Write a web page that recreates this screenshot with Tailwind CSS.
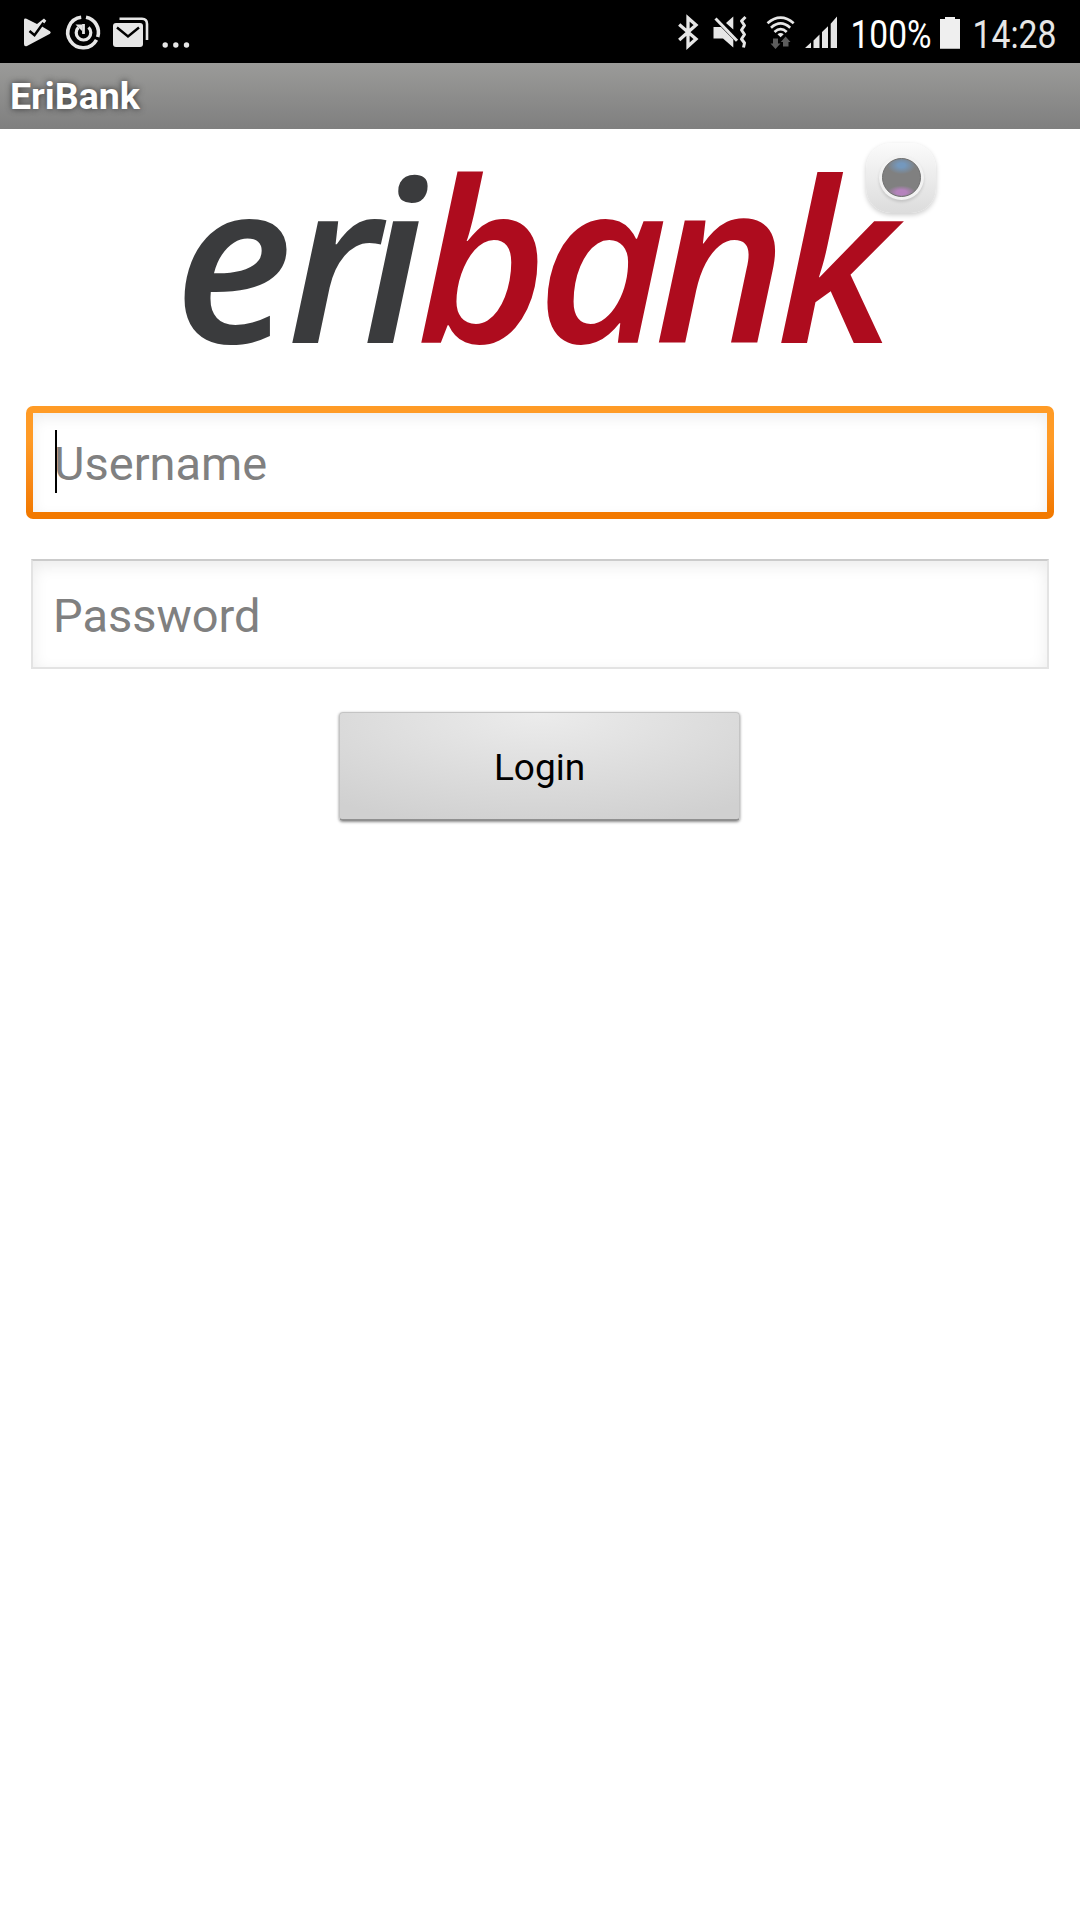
<!DOCTYPE html>
<html lang="en">
<head>
<meta charset="utf-8">
<meta name="viewport" content="width=device-width">
<title>EriBank</title>
<script src="https://cdn.jsdelivr.net/npm/@tailwindcss/browser@4"></script>
</head>
<body class="bg-white font-['Roboto',sans-serif]">
<div class="flex h-[1920px] w-[1080px] flex-col overflow-hidden bg-white">
  <header class="flex h-[63px] shrink-0 bg-black">
    <svg class="h-[63px] w-[1080px]" viewBox="0 0 1080 63" fill="#e6e6e6">
      <!-- store -->
      <path d="M24 20Q24 18 26.500 18.700L37 24L44 18.500L46.300 20.800L42 26.400L50 31.300Q51.500 32.500 50 33.700L27 46Q24 47 24 44Z"/>
      <path d="M29.500 31L34.500 35.200L43.500 22.700" fill="none" stroke="#000" stroke-width="2.500"/>
      <!-- power ring -->
      <g fill="none" stroke="#e6e6e6" stroke-width="3.600">
        <path d="M81.200 17.300A15.300 15.300 0 1 0 96.500 39.800M86 17.300A15.300 15.300 0 0 1 97.700 37"/>
        <path d="M78.400 27.500A7.300 7.300 0 1 0 88.500 27.400" stroke-width="3.200"/>
        <path d="M83.500 24V34" stroke-width="2.800"/>
      </g>
      <path d="M75.500 24.500H82V31Z"/>
      <!-- mail -->
      <path d="M119.500 18.800H142Q147 18.800 147 24V40" fill="none" stroke="#e6e6e6" stroke-width="2.600"/>
      <rect x="113" y="23" width="30" height="24" rx="3"/>
      <path d="M117 27.500L128 36.500L139 27.500" fill="none" stroke="#000" stroke-width="2.400"/>
      <circle cx="165.200" cy="45" r="2.700"/><circle cx="175.800" cy="45" r="2.700"/><circle cx="186.500" cy="45" r="2.700"/>
      <!-- bluetooth -->
      <path d="M679.200 24.500L696 39L688 46.300V18L696 25L679.200 40" fill="none" stroke="#e6e6e6" stroke-width="3.300"/>
      <!-- muted / vibrate -->
      <path d="M713.500 27H721L733.300 39.500V47.500L723 38.500H713.500ZM726 23L733.300 16.500V29.500Z"/>
      <path d="M715.500 18.500L737 40.800" stroke="#e6e6e6" stroke-width="3"/>
      <path d="M745.500 17L741.500 21L744.500 25.500L741.500 30L744.500 34.500L741.500 39L744.500 43L743.500 47.500" fill="none" stroke="#e6e6e6" stroke-width="3" stroke-linejoin="round"/>
      <!-- wifi -->
      <g fill="none" stroke="#e6e6e6" stroke-width="2.700">
        <path d="M767.500 23.200Q780.600 12 793.700 23.200"/>
        <path d="M771 27.700Q780.600 19.200 790.200 27.700"/>
        <path d="M774.500 32Q780.600 26.200 786.700 32"/>
      </g>
      <path d="M777.500 34.200Q780.600 32 783.700 34.200L780.600 37.300Z"/>
      <path fill="#5c5c5c" d="M773 38.500H778V43.500H780.500L775.500 49L770.500 43.500H773ZM783 46.500H788.500V42H790.500L785.600 36.500L780.800 42H783Z"/>
      <!-- signal -->
      <path d="M805 48L811 42.500V48ZM813.500 40.500L819.500 34.500V48H813.500ZM822 32L828 26.300V48H822ZM830.700 23.700L837 16.500V48H830.700Z"/>
      <text x="850.500" y="48" font-size="39.500" fill="#fff" textLength="81" lengthAdjust="spacingAndGlyphs">100%</text>
      <path fill="#efefef" d="M940 19H945V17H955V19H960V48.700H940Z"/>
      <text x="972.500" y="48" font-size="39.500" textLength="84" lengthAdjust="spacingAndGlyphs">14:28</text>
    </svg>
  </header>
  <div class="flex h-[66px] shrink-0 items-center bg-linear-to-b from-[#9b9b99] to-[#7f7f7f] pt-px pl-[10px] text-[37.5px] leading-none font-bold text-white [text-shadow:0_0_6px_#333]">EriBank</div>
  <main class="flex flex-col items-center">
    <div class="relative h-[277px] w-[1080px]">
      <svg class="block h-[277px] w-[1080px] overflow-visible" viewBox="0 129 1080 277">
        <text y="342.500" font-family="Open Sans" font-style="italic" font-weight="600" font-size="225"><tspan x="174 287 362" fill="#3a3b3d">eri</tspan><tspan x="416 537 654 776" fill="#ae0c1e">bank</tspan></text>
      </svg>
      <div class="absolute top-[14px] left-[866px] flex h-[70px] w-[70px] items-center justify-center rounded-[25px] bg-linear-to-b from-[#fbfbfb] to-[#dcdcdc] shadow-[0_2px_5px_#0003]">
        <div class="flex size-[45px] -translate-y-px items-center justify-center rounded-full bg-[#f2f2f2] shadow-[0_2px_3px_#0002]">
          <div class="size-[39px] rounded-full border border-[#707070] bg-[#808080] bg-[radial-gradient(ellipse_38%_24%_at_50%_17%,#7498bd_25%,transparent),radial-gradient(ellipse_38%_18%_at_50%_90%,#b583bd_35%,transparent)]"></div>
        </div>
      </div>
    </div>
    <div class="h-[113px] w-[1028px] rounded-[7px] bg-linear-to-b from-[#ff9b26] from-30% to-[#f27900] to-95% p-[7px]">
      <div class="flex h-full items-center bg-white pt-[2px] pl-[22px] text-[47px] leading-none text-[#808080] shadow-[inset_0_5px_14px_#00000012]">
        <span class="h-[63px] w-[2px] -translate-y-[2px] bg-black"></span><span class="-ml-[3px]">Username</span>
      </div>
    </div>
    <div class="mt-[40px] flex h-[110px] w-[1018px] items-center border-2 border-[#e3e3e3] border-t-[#cbcbcb] bg-white pt-[3px] pl-[20px] text-[47px] leading-none text-[#808080] shadow-[inset_0_5px_16px_#00000015]">Password</div>
    <button class="mt-[43px] mr-px flex h-[109px] w-[401px] items-center justify-center rounded-[4px] border border-[#c4c4c4] border-b-2 border-b-[#909090] bg-[radial-gradient(ellipse_80%_110%_at_50%_0%,#ececec,#d0d0d0)] pt-[3px] text-[37px] leading-none text-black shadow-[0_1px_3px_#0007]">Login</button>
  </main>
</div>
</body>
</html>
